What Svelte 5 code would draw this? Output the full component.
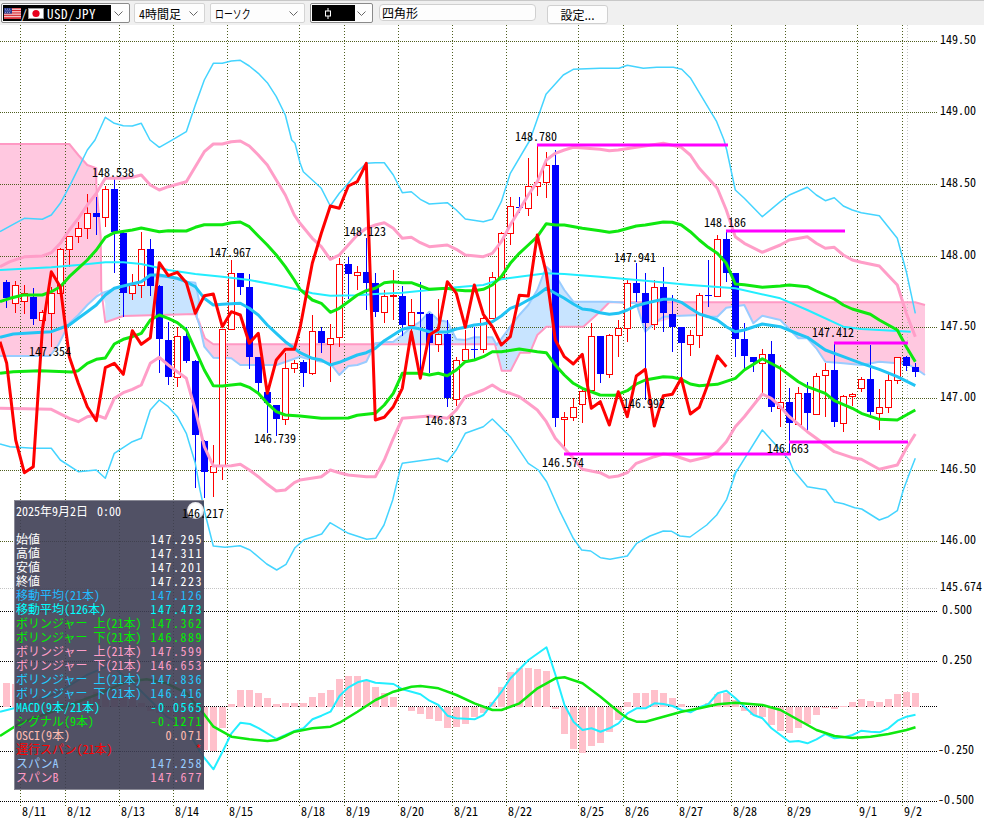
<script>
  // zoomed-crop coordinates -> page coordinates
  const at = (ox, oy, sx, sy) => (pts) => pts.map(([x, y]) => [ox + x / sx, oy + y / sy])
  const z3 = at(0, 130, 3, 3)
  const z4 = at(300, 130, 3, 3)
  const z5 = at(600, 130, 3, 3)
  const z6 = at(200, 600, 2, 3)
  const zm = at(0, 490, 3, 3)
  const zt = at(0, 30, 3, 3)
  const zu = at(500, 30, 3, 3)
  const zl = at(200, 470, 3, 3)
  const zr = at(560, 470, 3, 3)
  const pts = (list) => list.map(([x, y]) => `${x.toFixed(1)},${y.toFixed(1)}`).join(' ')

  const vgrid = [20, 65, 119, 173, 227, 299, 344, 398, 452, 506, 578, 623, 677, 731, 785, 857, 902]
  const dates = ['8/11', '8/12', '8/13', '8/14', '8/15', '8/18', '8/19', '8/20', '8/21', '8/22', '8/25', '8/26', '8/27', '8/28', '8/29', '9/1', '9/2']
  const priceGrid = [
    [41, '149.50'], [112, '149.00'], [184, '148.50'], [256, '148.00'],
    [327, '147.50'], [398, '147.00'], [470, '146.50'], [541, '146.00'],
  ]
  const macdGrid = [
    [611, '0.500', 942], [661, '0.250', 942], [706, '', 942], [751, '-0.250', 938], [801, '-0.500', 938],
  ]
  const labels = [
    [92, 177, '148.538'], [29, 356, '147.354'], [209, 257, '147.967'], [254, 443, '146.739'],
    [344, 236, '148.123'], [515, 141, '148.780'], [425, 425, '146.873'], [542, 467, '146.574'],
    [614, 262, '147.941'], [623, 408, '146.992'], [704, 227, '148.186'], [812, 337, '147.412'],
    [767, 453, '146.663'],
  ]
  const marks = [
    [537, 145, 728], [726, 231, 845], [564, 454, 791], [789, 442, 908], [834, 343, 908],
  ]

  // dir (1 up, 0 down), wick top, body top, body bottom, wick bottom (crop y)
  const candles = [
    [0,450,455,505,535],[1,452,466,520,550],[1,465,490,514,552],[0,475,502,567,585],[1,540,547,570,590],
    [1,470,490,550,650],[1,355,358,490,490],[1,318,320,358,410],[1,275,295,320,338],[1,192,250,295,327],
    [0,200,250,260,315],[1,168,178,262,290],[0,148,178,305,430],[0,300,310,488,560],[1,432,465,490,510],
    [1,305,358,465,505],[0,328,358,467,498],[0,465,468,628,730],[0,575,630,740,765],[1,590,618,742,770],
    [0,590,618,693,700],[0,690,693,915,1075],[0,930,933,1025,1105],[1,945,1008,1027,1100],[1,598,598,1005,1050],
    [1,390,430,598,600],[0,430,430,472,495],[0,432,472,680,718],[0,680,680,760,785],[0,785,785,820,910],
    [0,825,825,866,918],[1,670,715,868,885],[1,690,700,715,728],[0,690,695,728,770],[1,555,604,730,735],
    [0,590,604,640,668],[1,582,625,643,755],[1,385,403,622,650],[0,380,403,433,508],[1,408,427,436,480],
    [0,325,427,458,540],[0,430,460,545,560],[1,480,498,547,578],[1,420,497,498,570],[0,468,497,584,618],
    [1,508,547,585,622],[0,455,547,553,745],[0,550,553,640,730],[1,508,613,643,665],[0,570,613,805,830],
    [1,682,690,808,828],[1,600,658,690,692],[0,592,657,659,690],[1,562,565,658,670],[1,425,442,565,567],
    [1,305,310,442,445],[1,200,230,310,345],[0,200,230,232,250],[1,85,170,235,258],[1,45,157,170,198],
    [1,65,105,157,203],[0,60,105,865,890],[1,845,862,868,950],[1,805,832,862,872],[1,780,785,822,878],
    [1,580,620,780,782],[0,618,618,732,760],[1,612,616,733,745],[1,570,595,616,682],[1,450,460,595,635],
    [0,400,460,488,515],[0,430,490,580,810],[1,450,472,583,600],[0,410,472,550,605],[0,495,552,590,665],
    [0,590,592,640,740],[1,600,617,643,677],[1,490,497,616,653],[0,390,495,497,530],[1,315,328,500,500],
    [0,305,328,428,455],[0,430,430,628,680],[0,580,628,678,717],[0,680,682,697,725],[1,657,673,700,790],
    [0,633,673,832,845],[1,705,817,835,890],[0,775,817,880,975],[1,770,790,883,885],[0,755,790,850,905],
    [1,730,740,853,855],[1,700,722,736,860],[0,640,720,877,890],[1,795,800,880,905],[1,788,792,800,828],
    [1,740,748,775,785],[0,645,748,847,865],[1,778,832,850,900],[1,730,750,832,850],[1,680,683,750,762],
    [0,677,680,708,722],[0,698,712,727,742],
  ].map(([d, a, b, c, e], i) => ({
    up: d === 1,
    x: 6 + 9 * i,
    wt: 130 + a / 3, bt: 130 + b / 3, bb: 130 + c / 3, wb: 130 + e / 3,
  }))

  const histTop = [
    683, 684, 688, 692, 696, 700, 702, 700, 699, 696, 692, 690, 688, 690, 695, 703, 711, 713, 716, 726, 730, 738,
    ...[450,452,385,312,270,270,280,295,312,308,310,308,290,280,270,238,228,228,242,260,278,290,322,333,342,357,362,384,381,372,352,340,305,260,215,205,203,207,212,327,403,447,458,438,430,396,360,305,280,280,270,280,295,312,322,325,310,282,278,300,332,345,352,375,393,398,384,372,345,325,327,317,305,297,303,306,297,282,276,280].map((v) => 600 + v / 3),
  ]
  const hist = histTop.map((t, i) => ({ x: 3 + 9 * i, y: Math.min(t, 706.5), h: Math.abs(t - 706.5) }))

  const cloudPink = [
    [...z3([[0,42],[208,42],[235,75],[262,105],[289,115],[289,165],[302,320],[304,480],[289,500],[262,525],[235,555],[208,580],[175,645],[150,678],[0,678]])],
    [...z3([[597,560],[615,625],[640,643],[900,643]]), ...z4([[226,643],[199,695],[172,705],[145,708],[118,735],[91,700],[37,690]]), ...z3([[900,680],[830,705],[721,705],[694,685],[640,683],[613,650],[600,590]])],
    [...z5([[28,517],[946,517],[975,525],[975,735],[946,715],[919,700],[892,700],[838,695],[784,705],[730,700],[676,695],[649,655],[622,625],[595,625],[541,570],[487,557],[460,580],[433,525],[379,533],[352,560],[325,560],[244,557],[163,580],[136,605],[109,520]])],
  ]
  const cloudBlue = [
    z3([[305,490],[340,478],[370,465],[424,455],[451,440],[505,440],[560,455],[586,458],[597,510],[586,552],[370,558],[316,577],[316,520]]),
    z4([[226,638],[253,637],[280,635],[307,615],[334,592],[361,575],[388,545],[415,570],[442,575],[469,628],[496,630],[523,622],[577,622],[590,643]]),
    [...z4([[590,645],[631,590],[658,555],[685,525],[712,480],[739,410],[766,435],[793,480],[820,515],[900,515]]), ...z5([[28,515],[28,517]]), ...z4([[900,545],[850,590],[739,590],[712,615],[690,668],[660,668],[632,722],[605,722]])],
  ]
  const spanA = [
    ...z3([[0,678],[150,678],[175,645],[208,580],[235,555],[262,525],[289,500],[305,490],[340,478],[370,465],[424,455],[451,440],[505,440],[560,455],[586,458],[597,510],[590,560],[600,590],[613,650],[640,683],[694,685],[721,705],[830,705],[900,680]]),
    ...z4([[37,690],[91,700],[118,735],[145,708],[172,705],[199,695],[226,640],[253,637],[280,635],[307,615],[334,592],[361,575],[388,545],[415,570],[442,575],[469,628],[496,630],[523,622],[577,622],[590,645],[631,590],[658,555],[685,525],[712,480],[739,410],[766,435],[793,480],[820,515],[900,515]]),
    ...z5([[28,515],[109,520],[136,605],[163,580],[190,560],[244,557],[298,555],[325,560],[352,560],[379,533],[433,525],[460,580],[487,557],[541,570],[595,625],[622,625],[649,655],[676,695],[730,700],[784,705],[838,695],[892,700],[919,700],[946,715],[975,735]]),
  ]
  const spanB = [
    ...z3([[0,42],[208,42],[235,75],[262,105],[289,115],[289,165],[302,320],[304,480],[316,577],[370,558],[586,552],[600,585],[615,625],[640,643],[900,643]]),
    ...z4([[226,643],[585,643],[605,722],[632,722],[660,668],[690,668],[712,615],[739,590],[850,590],[900,545]]),
    ...z5([[28,517],[946,517],[975,525]]),
  ]

  const bbThinUp = [
    ...z3([[0,305],[45,280],[73,265],[127,268],[154,255],[181,220],[208,170],[235,115],[262,60]]),
    ...zt([[285,330],[316,262],[343,280],[370,287],[397,288],[424,280],[450,330]]),
    ...z3([[478,52]]),
    ...zt([[520,328],[559,305],[586,225],[613,150],[640,100],[667,100],[694,93],[721,91],[748,108],[775,130],[802,158],[829,200],[856,255],[875,330]]),
    ...z3([[885,40]]),
    ...z4([[0,98],[10,125],[64,175],[91,228],[118,190],[145,160],[172,125],[199,100],[226,98],[253,98],[280,135],[307,188],[334,185],[361,208],[388,222],[442,218],[469,240],[496,267],[550,275],[577,268],[604,215],[631,130]]),
    ...zu([[90,330],[138,193],[190,135],[220,118],[300,115],[357,115],[382,106],[430,115],[470,112],[520,112],[545,118],[572,145],[650,275],[672,330]]),
    ...z5([[380,60],[406,180],[433,205],[487,260],[541,215],[568,195],[622,172],[649,195],[676,212],[703,203],[730,228],[757,240],[784,248],[838,257],[892,325],[919,425],[946,550]]),
  ]
  const bbThinDown = [
    ...z3([[0,942],[30,950],[100,955],[154,955],[181,990],[235,1025],[289,1020],[316,1045],[343,970],[397,935],[424,925],[451,840],[478,810],[505,830],[532,860],[559,910],[586,1000]]),
    ...zl([[0,60],[15,130],[40,228],[75,232],[120,227],[150,240],[200,282],[230,300],[258,283],[285,233],[312,209],[365,192],[390,158],[445,190],[500,208],[527,205],[552,165],[578,90],[600,0]]),
    ...z4([[307,1000],[361,992],[415,985],[442,995],[469,960],[496,910],[550,890],[577,867],[631,920],[685,1000]]),
    ...zl([[1015,0],[1040,35],[1080,125],[1120,205],[1145,240],[1172,243],[1200,262]]),
    ...zr([[122,263],[150,268],[202,258],[230,220],[270,198],[310,183],[335,184],[360,198],[390,201],[440,165],[470,135],[500,88],[530,0]]),
    ...z5([[400,1040],[487,900],[568,990]]),
    ...zr([[700,0],[742,50],[797,59],[824,96],[850,101],[884,113],[905,117],[958,150],[985,140],[1012,122],[1030,60],[1052,0]]),
    ...z5([[946,985]]),
  ]
  const bbPinkUp = [
    ...z3([[0,410],[30,395],[75,380],[127,378],[154,368],[181,340],[208,300],[235,265],[262,225],[289,190],[316,145],[370,145],[397,142],[424,135],[451,165],[478,180],[505,170],[559,155],[586,110],[613,65],[640,42],[667,42],[694,35],[721,33],[748,48],[775,75],[802,105],[829,150],[856,195],[883,255],[900,280]]),
    ...z4([[37,325],[64,350],[91,388],[118,375],[145,345],[172,315],[199,295],[226,285],[253,278],[280,295],[307,325],[334,322],[361,338],[388,350],[442,345],[469,358],[496,375],[550,380],[577,370],[604,335],[631,285],[658,240],[685,195],[712,155],[739,90],[766,70],[793,60],[820,52],[900,58]]),
    ...z5([[28,62],[55,60],[109,52],[190,40],[244,52],[271,75],[298,115],[325,145],[352,175],[379,240],[406,320],[433,340],[487,367],[541,345],[568,330],[622,320],[649,340],[676,355],[703,352],[730,375],[757,390],[784,397],[838,408],[892,465],[919,550],[946,620]]),
  ]
  const bbPinkDown = [
    ...z3([[0,835],[154,838],[208,865],[235,875],[262,860],[289,855],[316,865],[343,805],[370,788],[397,778],[424,765],[451,700],[478,682],[505,705],[532,725],[559,745],[586,840],[613,950],[640,1008],[694,1007],[721,1003],[748,1020],[775,1040],[802,1063],[829,1083],[856,1080],[883,1058],[900,1050]]),
    ...z4([[64,1040],[91,1020],[118,1028],[145,1035],[199,1040],[226,1040],[253,990],[280,925],[307,865],[361,860],[388,858],[442,865],[469,840],[496,800],[523,790],[550,780],[577,765],[604,782],[631,790],[658,800],[685,820],[712,840],[739,875],[766,925],[793,955],[820,985],[847,1018],[900,1028]]),
    ...z5([[28,1042],[55,1038],[82,1028],[109,1000],[163,980],[190,972],[217,975],[271,993],[325,980],[352,965],[379,935],[406,890],[433,860],[487,792],[514,805],[541,830],[568,860],[622,905],[649,925],[703,965],[757,983],[784,988],[838,1018],[892,1005],[919,955],[946,912]]),
  ]
  const bbGreenUp = [
    ...z3([[0,515],[30,505],[70,495],[127,495],[154,485],[181,470],[208,440],[235,415],[262,390],[289,360],[316,322],[343,308],[397,300],[424,294],[478,305],[505,302],[559,303],[586,292],[613,284],[667,284],[694,278],[721,276],[748,290],[775,318],[802,345],[829,375],[856,410],[883,450],[900,478]]),
    ...z4([[37,510],[64,520],[91,547],[118,535],[145,515],[172,495],[199,482],[226,475],[253,458],[280,455],[307,458],[334,458],[361,468],[388,478],[442,475],[469,480],[496,482],[523,482],[550,478],[577,465],[604,440],[631,400],[658,370],[685,345],[712,320],[739,281],[766,285],[793,285],[847,295],[900,302]]),
    ...z5([[28,307],[55,303],[109,288],[136,285],[190,276],[217,277],[244,285],[271,305],[298,330],[325,352],[352,370],[379,400],[406,462],[433,464],[487,472],[541,468],[568,465],[622,470],[649,483],[703,507],[730,525],[757,537],[811,553],[838,570],[892,600],[919,650],[946,695]]),
  ]
  const bbGreenDown = [
    ...z3([[0,730],[40,725],[120,722],[215,726],[235,722],[262,700],[289,688],[316,684],[343,642],[370,628],[397,620],[424,610],[451,570],[478,555],[505,565],[532,578],[559,600],[586,660],[613,720],[640,767],[667,768],[694,765],[721,762],[748,772],[775,790],[802,820],[829,845],[856,855],[900,858]]),
    ...z4([[64,865],[145,864],[172,856],[226,850],[253,825],[280,790],[307,730],[334,730],[361,730],[388,735],[415,730],[442,737],[469,720],[496,695],[523,690],[550,680],[577,665],[604,665],[658,657],[712,665],[739,668],[766,705],[793,735],[820,760],[847,775],[900,795]]),
    ...z5([[45,796],[82,782],[109,762],[136,750],[190,740],[217,742],[244,748],[271,762],[298,767],[352,763],[406,745],[433,720],[487,686],[541,715],[595,755],[622,770],[676,790],[703,812],[757,835],[784,850],[838,868],[892,870],[919,855],[946,840]]),
  ]
  const ma21 = [
    ...z3([[0,622],[40,612],[127,607],[154,605],[208,585],[235,565],[262,545],[289,525],[316,495],[343,475],[370,468],[424,455],[451,435],[478,435],[532,445],[559,455],[586,470],[613,505],[640,525],[667,523],[721,520],[748,535],[775,555],[802,585],[829,610],[856,635],[883,655],[900,668]]),
    ...z4([[37,685],[64,690],[91,705],[118,697],[172,675],[199,668],[226,655],[253,632],[280,615],[307,598],[334,592],[361,597],[388,605],[442,606],[469,597],[496,592],[523,585],[550,582],[577,575],[604,558],[631,535],[658,525],[685,510],[712,495],[739,475],[766,490],[793,505],[820,522],[847,537],[873,540],[900,548]]),
    ...z5([[28,553],[55,550],[82,540],[109,527],[136,520],[190,508],[217,508],[244,517],[271,535],[298,552],[325,560],[352,570],[379,590],[406,605],[433,600],[487,582],[541,590],[595,612],[622,622],[676,660],[730,680],[784,700],[838,718],[892,740],[946,767]]),
  ]
  const ma126 = [
    ...z3([[0,420],[154,412],[235,405],[316,397],[370,397],[424,402],[505,420],[586,432],[667,440],[748,450],[829,465],[900,480]]),
    ...z4([[37,490],[91,497],[172,496],[226,492],[307,488],[388,480],[469,472],[550,465],[604,448],[658,440],[739,430],[793,432],[900,440]]),
    ...z5([[136,452],[271,465],[406,475],[541,505],[622,540],[730,590],[784,597],[932,605]]),
  ]
  const chikou = [
    ...z3([[0,635],[20,700],[47,930],[73,1028],[100,1010],[127,600],[154,425],[181,470],[208,680],[235,760],[262,830],[289,872],[316,713],[343,700],[370,733],[397,602],[424,643],[451,623],[478,398],[505,437],[532,427],[559,458],[586,550],[613,497],[640,492],[667,590],[694,545],[721,555],[748,640],[775,610],[802,790],[829,690],[856,658],[883,658],[900,595]]),
    ...z4([[37,400],[64,310],[91,228],[118,235],[145,168],[172,155],[199,100],[226,870],[253,862],[280,830],[307,775],[334,605],[361,745],[388,615],[415,598],[442,455],[469,490],[496,592],[523,465],[550,553],[577,590],[604,645],[631,620],[658,496],[685,498],[712,315],[739,430],[766,630],[793,680],[820,702],[847,673],[874,835],[901,815]]),
    ...z5([[28,885],[55,785],[82,860],[109,738],[136,718],[163,888],[190,797],[217,793],[244,745],[271,852],[298,832],[325,760],[352,678],[379,710]]),
  ]
  const macd = [
    ...zm([[0,665],[60,650],[170,610],[260,555],[320,530],[350,540],[410,590],[450,630],[500,680],[540,700],[580,750],[610,800]]),
    ...z6([[27,508],[45,455],[63,400],[81,368],[100,372],[118,385],[153,417],[171,405],[189,393],[207,385],[225,358],[243,347],[261,335],[279,288],[297,262],[315,247],[333,240],[351,248],[387,252],[405,268],[441,283],[459,302],[477,315],[495,347],[513,355],[549,358],[567,345],[585,310],[603,275],[621,235],[657,180],[693,142],[711,225],[729,315],[747,365],[765,390],[783,385],[801,395],[819,385],[837,370],[855,340],[873,325],[891,325],[909,310],[927,312],[945,318],[963,330],[981,337],[999,322],[1017,312],[1035,280],[1053,272],[1071,295],[1089,320],[1107,345],[1125,355],[1143,385],[1179,425],[1197,423],[1215,430],[1233,418],[1251,402],[1269,415],[1287,412],[1305,405],[1323,392],[1341,395],[1359,397],[1377,385],[1395,362],[1413,350],[1431,344]]),
  ]
  const signal = [
    ...zm([[0,738],[60,700],[170,660],[300,610],[380,575],[440,568],[500,580],[560,610],[610,670]]),
    ...z6([[27,380],[63,410],[99,418],[135,423],[153,420],[171,408],[189,395],[225,385],[261,380],[279,368],[315,335],[351,300],[387,275],[423,260],[441,258],[477,265],[513,285],[549,310],[585,330],[603,330],[639,310],[675,265],[711,235],[729,232],[765,250],[801,290],[837,335],[855,355],[873,365],[891,365],[927,350],[963,335],[999,325],[1035,313],[1071,308],[1125,315],[1161,330],[1197,360],[1233,390],[1269,408],[1305,414],[1341,410],[1377,402],[1413,390],[1431,382]]),
  ]

  const rows = [
    ['始値', '147.295', '#ffffff'],
    ['高値', '147.311', '#ffffff'],
    ['安値', '147.201', '#ffffff'],
    ['終値', '147.223', '#ffffff'],
    ['移動平均(21本)', '147.126', '#22bbff'],
    ['移動平均(126本)', '147.473', '#00ffff'],
    ['ボリンジャー 上(21本)', '147.362', '#00f000'],
    ['ボリンジャー 下(21本)', '146.889', '#00f000'],
    ['ボリンジャー 上(21本)', '147.599', '#ff9ec8'],
    ['ボリンジャー 下(21本)', '146.653', '#ff9ec8'],
    ['ボリンジャー 上(21本)', '147.836', '#22ccff'],
    ['ボリンジャー 下(21本)', '146.416', '#22ccff'],
    ['MACD(9本/21本)', '-0.0565', '#00ffff'],
    ['シグナル(9本)', '-0.1271', '#00f000'],
    ['OSCI(9本)', '0.071', '#ffbbb0'],
    ['遅行スパン(21本)', '*', '#ff0000'],
    ['スパンA', '147.258', '#99ccff'],
    ['スパンB', '147.677', '#ff99c4'],
  ]
</script>

<div class="page">
  <div class="toolbar">
    <div class="combo focus wide">
      <div class="picked symbol">
        <svg class="flag" width="17" height="11" viewBox="0 0 17 11">
          <rect width="17" height="11" fill="#fff" />
          <path d="M0 .8H17M0 2.5H17M0 4.2H17M0 5.9H17M0 7.6H17M0 9.3H17M0 10.6H17" stroke="#d8242c" stroke-width="1" />
          <rect width="8" height="5.6" fill="#2b3a8c" />
          <path d="M1 1.2H7M1.6 2.8H6.6M1 4.4H7" stroke="#cdd3ee" stroke-width=".7" stroke-dasharray="1 1" />
        </svg>
        <span class="slash">/</span>
        <svg class="flag" width="16" height="11" viewBox="0 0 16 11">
          <rect x=".5" y=".5" width="15" height="10" fill="#fff" stroke="#999" />
          <circle cx="8" cy="5.5" r="3.6" fill="#e8001c" />
        </svg>
        <span class="pair">USD/JPY</span>
      </div>
      <svg class="chev" width="9" height="5" viewBox="0 0 9 5"><path d="M.5 .5L4.5 4.5L8.5 .5" fill="none" stroke="#666" /></svg>
    </div>
    <div class="combo period">
      <span class="val">4時間足</span>
      <svg class="chev" width="9" height="5" viewBox="0 0 9 5"><path d="M.5 .5L4.5 4.5L8.5 .5" fill="none" stroke="#666" /></svg>
    </div>
    <div class="combo kind">
      <span class="val narrow">ローソク</span>
      <svg class="chev" width="9" height="5" viewBox="0 0 9 5"><path d="M.5 .5L4.5 4.5L8.5 .5" fill="none" stroke="#666" /></svg>
    </div>
    <div class="combo focus candle">
      <div class="picked">
        <svg width="8" height="11" viewBox="0 0 8 11">
          <path d="M4 0V3M4 8V11" stroke="#fff" stroke-width="1" />
          <rect x="1.5" y="3" width="5" height="5" fill="none" stroke="#fff" />
        </svg>
      </div>
      <svg class="chev" width="9" height="5" viewBox="0 0 9 5"><path d="M.5 .5L4.5 4.5L8.5 .5" fill="none" stroke="#666" /></svg>
    </div>
    <div class="field">四角形</div>
    <button class="setup">設定...</button>
  </div>

  <div class="chart">
    <svg class="plot" width="984" height="795" viewBox="0 25 984 795">
      <g class="cloud">
        {#each cloudPink as p}<polygon points={pts(p)} fill="#ffc8e0" />{/each}
        {#each cloudBlue as p}<polygon points={pts(p)} fill="#c8e4ff" />{/each}
      </g>

      <g shape-rendering="crispEdges">
        {#each priceGrid as [y]}
          <line x1="0" x2="937" y1={y + 0.5} y2={y + 0.5} stroke="#4f5f1f" stroke-dasharray="1 1" />
        {/each}
        <line x1="0" x2="937" y1="588.5" y2="588.5" stroke="#c4c4c4" stroke-dasharray="1 1" />
        {#each macdGrid as [y]}
          <line x1="0" x2="937" y1={y + 0.5} y2={y + 0.5} stroke="#000" stroke-dasharray="1 1" />
        {/each}
        {#each vgrid as x}
          <line x1={x + 0.5} x2={x + 0.5} y1="25" y2="806" stroke="#4f5f1f" stroke-dasharray="1 2" />
        {/each}
        <line x1="907.5" x2="907.5" y1="25" y2="806" stroke="#c4c4c4" stroke-dasharray="1 2" />
      </g>

      <polyline points={pts(spanB)} class="ln" stroke="#ff99c4" stroke-width="2" />
      <polyline points={pts(spanA)} class="ln" stroke="#99ccff" stroke-width="2" />

      <g shape-rendering="crispEdges">
        {#each candles as c}
          <line x1={c.x + 0.5} x2={c.x + 0.5} y1={c.wt} y2={c.wb} stroke={c.up ? '#ff0000' : '#0000ff'} />
          {#if c.up}
            <rect x={c.x - 2.5} y={c.bt} width="6" height={Math.max(c.bb - c.bt, 1)} fill="#fff" stroke="#ff0000" />
          {:else}
            <rect x={c.x - 3} y={c.bt} width="7" height={Math.max(c.bb - c.bt, 1)} fill="#0000ff" />
          {/if}
        {/each}
        {#each hist as b}
          <rect x={b.x} y={b.y} width="7" height={b.h} fill="#ffc0cb" />
        {/each}
      </g>

      <polyline points={pts(bbThinUp)} class="ln" stroke="#44d4ff" stroke-width="1.5" />
      <polyline points={pts(bbThinDown)} class="ln" stroke="#44d4ff" stroke-width="1.5" />
      <polyline points={pts(bbPinkUp)} class="ln" stroke="#ff9ec8" stroke-width="3" />
      <polyline points={pts(bbPinkDown)} class="ln" stroke="#ff9ec8" stroke-width="3" />
      <polyline points={pts(ma126)} class="ln" stroke="#22eeff" stroke-width="2" />
      <polyline points={pts(bbGreenUp)} class="ln" stroke="#0fe80f" stroke-width="3" />
      <polyline points={pts(bbGreenDown)} class="ln" stroke="#0fe80f" stroke-width="3" />
      <polyline points={pts(ma21)} class="ln" stroke="#22c4f4" stroke-width="3" />
      <polyline points={pts(chikou)} class="ln" stroke="#ff0000" stroke-width="3" />

      {#each marks as [x1, y, x2]}
        <line {x1} {x2} y1={y} y2={y} stroke="#ff00ff" stroke-width="3" />
      {/each}

      <polyline points={pts(macd)} class="ln" stroke="#22eeff" stroke-width="2" />
      <polyline points={pts(signal)} class="ln" stroke="#0fe80f" stroke-width="2.5" />

      {#each labels as [x, y, t]}
        <text {x} {y} class="tick">{t}</text>
      {/each}
      {#each priceGrid as [y, t]}
        <text x="940" y={y + 3} class="tick">{t}</text>
      {/each}
      <text x="940" y="591" class="tick">145.674</text>
      {#each macdGrid as [y, t, x]}
        <text {x} y={y + 3} class="tick">{t}</text>
      {/each}
      {#each vgrid as x, i}
        <text x={x + 2} y="816" class="tick">{dates[i]}</text>
      {/each}
    </svg>

    <div class="info">
      <span class="knob"></span>
      <div class="row head">2025年9月2日 0:00</div>
      <div class="row"></div>
      {#each rows as [name, value, color]}
        <div class="row" style="color: {color}">
          <span>{name}</span>
          <span class="num">{value}</span>
        </div>
      {/each}
    </div>
    <span class="low">146.217</span>
  </div>
</div>

<style>
  :global(body) {
    margin: 0;
    background: #fff;
  }
  .page {
    width: 984px;
    height: 820px;
    overflow: hidden;
    font-family: "Noto Sans CJK JP", sans-serif;
    font-feature-settings: "hwid";
    color: #000;
  }
  .toolbar {
    border-top: 1px solid #c8c8c8;
    background: #f0f0f0;
    display: flex;
    align-items: flex-start;
    box-sizing: border-box;
    height: 25px;
    padding: 2px 0 0 1px;
    font-size: 12px;
  }
  .combo {
    height: 20px;
    box-sizing: border-box;
    display: flex;
    align-items: center;
    justify-content: space-between;
    border: 1px solid #d4d4d4;
    border-radius: 2px;
    background: #fdfdfd;
    padding-right: 6px;
    margin-right: 5px;
  }
  .combo.focus { border-color: #8a8a8a; }
  .wide { width: 129px; margin-right: 4px; }
  .period { width: 71px; }
  .kind { width: 95px; }
  .candle { width: 63px; margin-right: 6px; }
  .val { padding-left: 4px; }
  .val.narrow {
    display: inline-block;
    width: 48px;
    flex: none;
    margin-right: 26px;
    transform: scaleX(0.74);
    transform-origin: 4px 50%;
  }
  .picked {
    height: 16px;
    background: #000;
    color: #fff;
    display: flex;
    align-items: center;
    margin-left: 1px;
  }
  .symbol {
    width: 108px;
    padding-left: 1px;
    box-sizing: border-box;
    font-size: 13px;
  }
  .candle .picked {
    width: 43px;
    padding-left: 12px;
    box-sizing: border-box;
  }
  .slash { margin: 0 1px 0 0; font-size: 12px; }
  .pair {
    margin-left: 3px;
    letter-spacing: 0.5px;
  }
  .field {
    width: 157px;
    height: 17px;
    box-sizing: border-box;
    margin: 1px 11px 0 0;
    padding-left: 2px;
    line-height: 15px;
    font-size: 12px;
    background: #fdfdfd;
    border: 1px solid #d0d0d0;
    border-radius: 4px;
  }
  .setup {
    width: 61px;
    height: 19px;
    margin-top: 2px;
    padding: 0;
    font: inherit;
    font-size: 12px;
    font-feature-settings: normal;
    line-height: 17px;
    background: #fdfdfd;
    border: 1px solid #d0d0d0;
    border-radius: 3px;
  }
  .chart {
    position: relative;
    height: 795px;
  }
  .plot { display: block; }
  .ln {
    fill: none;
    stroke-linejoin: round;
  }
  .tick {
    font-size: 12px;
    fill: #000;
  }
  .info {
    position: absolute;
    left: 14px;
    top: 475px;
    width: 190px;
    height: 290px;
    box-sizing: border-box;
    padding: 3px 1px 0 1px;
    background: rgba(62, 62, 84, 0.9);
    border: 1px solid #8a8a96;
    border-width: 1px 0 1px 1px;
    font-size: 12px;
  }
  .row {
    height: 14px;
    line-height: 14px;
    display: flex;
    justify-content: space-between;
    white-space: pre;
  }
  .head {
    color: #fff;
    word-spacing: 3px;
  }
  .num { letter-spacing: 1.5px; }
  .knob {
    position: absolute;
    left: 172px;
    top: 1px;
    width: 17px;
    height: 17px;
    border-radius: 50%;
    background: radial-gradient(circle at 50% 45%, #fff 45%, #bcbcc8 85%, transparent 100%);
  }
  .low {
    position: absolute;
    left: 182px;
    top: 480px;
    line-height: 16px;
    font-size: 12px;
  }
</style>
